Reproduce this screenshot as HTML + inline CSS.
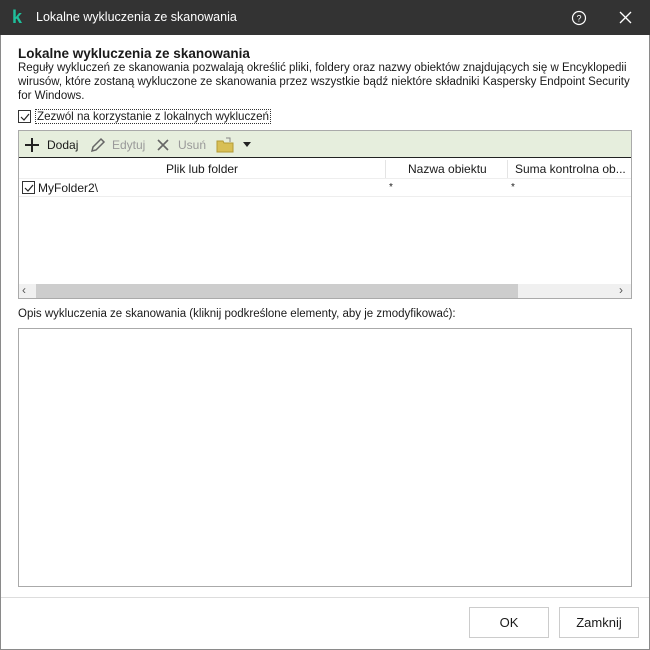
<!DOCTYPE html>
<html><head><meta charset="utf-8"><style>
*{margin:0;padding:0;box-sizing:border-box}
body{width:650px;height:650px;background:#fff;font-family:"Liberation Sans",sans-serif;font-size:12px;color:#1a1a1a;position:relative;overflow:hidden}
.a{position:absolute}
.title{left:0;top:0;width:650px;height:35px;background:#333;color:#fff;font-size:12.5px}
.cb{width:13px;height:13px;border:1px solid #333;background:#fff}
.btn{border:1px solid #ccc;background:#fff;text-align:center;line-height:29px;font-size:13px;color:#1a1a1a}
</style></head><body>
<div class="a" style="left:0;top:0;width:650px;height:650px;border:1px solid #8a8a8a"></div>
<div class="a title">
 <div class="a" style="left:12px;top:8px;color:#1fbf9b;font-weight:bold;font-size:18px;line-height:18px">k</div>
 <div class="a" style="left:36px;top:10px">Lokalne wykluczenia ze skanowania</div>
 <svg class="a" style="left:571px;top:10px" width="16" height="16"><circle cx="8" cy="8" r="6.5" fill="none" stroke="#fff" stroke-width="1.2"/><text x="8" y="11.5" fill="#fff" font-size="9" text-anchor="middle" font-family="Liberation Sans">?</text></svg>
 <svg class="a" style="left:619px;top:11px" width="13" height="13"><path d="M1 1L12 12M12 1L1 12" stroke="#fff" stroke-width="1.3"/></svg>
</div>
<div class="a" style="left:18px;top:46px;font-weight:bold;font-size:13.5px">Lokalne wykluczenia ze skanowania</div>
<div class="a" style="left:18px;top:61px;width:620px;line-height:14px;font-size:11.5px">Reguły wykluczeń ze skanowania pozwalają określić pliki, foldery oraz nazwy obiektów znajdujących się w Encyklopedii wirusów, które zostaną wykluczone ze skanowania przez wszystkie bądź niektóre składniki Kaspersky Endpoint Security for Windows.</div>
<div class="a cb" style="left:18px;top:110px"></div>
<svg class="a" style="left:19px;top:111px" width="12" height="12"><path d="M2 6L5 9L10 3" fill="none" stroke="#222" stroke-width="1.2"/></svg>
<div class="a" style="left:35px;top:109px;border:1px dotted #333;padding:0 1px;font-size:11.6px">Zezwól na korzystanie z lokalnych wykluczeń</div>
<div class="a" style="left:18px;top:130px;width:614px;height:169px;border:1px solid #aaa"></div>
<div class="a" style="left:19px;top:131px;width:612px;height:27px;background:#e6eedd;border-bottom:1px solid #222"></div>
<svg class="a" style="left:25px;top:138px" width="14" height="14"><path d="M7 0V14M0 7H14" stroke="#222" stroke-width="2"/></svg>
<div class="a" style="left:47px;top:138px">Dodaj</div>
<svg class="a" style="left:90px;top:137px" width="16" height="16"><path d="M2 14L3 10L11 2L14 5L6 13Z" fill="none" stroke="#666" stroke-width="1.5"/></svg>
<div class="a" style="left:112px;top:138px;color:#999">Edytuj</div>
<svg class="a" style="left:157px;top:139px" width="12" height="12"><path d="M1 1L11 11M11 1L1 11" stroke="#666" stroke-width="1.6"/></svg>
<div class="a" style="left:178px;top:138px;color:#999">Usuń</div>
<svg class="a" style="left:216px;top:137px" width="18" height="16"><path d="M1 4H7L8 6H17V15H1Z" fill="#d8bf55" stroke="#b39b35"/><path d="M10 1H14V5" fill="none" stroke="#888"/></svg>
<svg class="a" style="left:243px;top:142px" width="8" height="5"><path d="M0 0H8L4 5Z" fill="#222"/></svg>
<div class="a" style="left:19px;top:159px;width:612px;height:20px;border-bottom:1px solid #eee"></div>
<div class="a" style="left:166px;top:162px">Plik lub folder</div>
<div class="a" style="left:385px;top:160px;width:1px;height:18px;background:#e4e4e4"></div>
<div class="a" style="left:408px;top:162px">Nazwa obiektu</div>
<div class="a" style="left:507px;top:160px;width:1px;height:18px;background:#e4e4e4"></div>
<div class="a" style="left:515px;top:162px">Suma kontrolna ob...</div>
<div class="a cb" style="left:22px;top:181px"></div>
<svg class="a" style="left:23px;top:182px" width="12" height="12"><path d="M2 6L5 9L10 3" fill="none" stroke="#222" stroke-width="1.2"/></svg>
<div class="a" style="left:38px;top:181px">MyFolder2\</div>
<div class="a" style="left:389px;top:182px;font-size:10px">*</div>
<div class="a" style="left:511px;top:182px;font-size:10px">*</div>
<div class="a" style="left:19px;top:196px;width:612px;height:1px;background:#eee"></div>
<div class="a" style="left:19px;top:284px;width:612px;height:14px;background:#f0f0f0"></div>
<div class="a" style="left:36px;top:284px;width:482px;height:14px;background:#cdcdcd"></div>
<div class="a" style="left:22px;top:283px;font-size:12px;color:#555">‹</div>
<div class="a" style="left:619px;top:283px;font-size:12px;color:#555">›</div>
<div class="a" style="left:18px;top:308px;font-size:11.5px">Opis wykluczenia ze skanowania (kliknij podkreślone elementy, aby je zmodyfikować):</div>
<div class="a" style="left:18px;top:328px;width:614px;height:259px;border:1px solid #aaa"></div>
<div class="a" style="left:1px;top:597px;width:648px;height:1px;background:#ddd"></div>
<div class="a btn" style="left:469px;top:607px;width:80px;height:31px">OK</div>
<div class="a btn" style="left:559px;top:607px;width:80px;height:31px">Zamknij</div>
</body></html>
